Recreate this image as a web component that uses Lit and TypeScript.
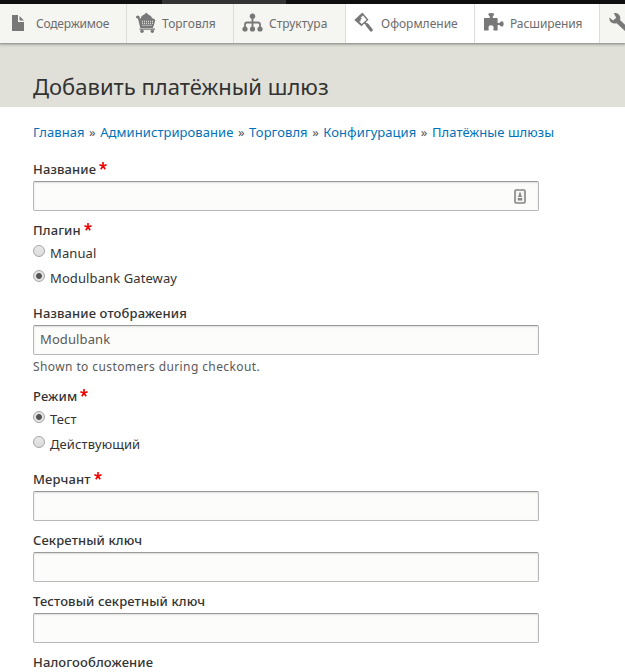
import { LitElement, html, css, svg, nothing } from "lit";
import { customElement, property } from "lit/decorators.js";
import { classMap } from "lit/directives/class-map.js";

const icons: Record<string, unknown> = {
  content: svg`<path d="M3 3H9V10H15V19H3ZM10.5 4V8.5H15Z"/>`,
  commerce: svg`<path fill="none" stroke="#787878" stroke-width="1.8" d="M1.5 5H3.5L6 15H18"/><circle cx="2.8" cy="5" r="1.6"/><path d="M6 6C6.3 3 9 3.5 11.3 .6 13.5 3.5 16 3 17 6L19 7Q20.3 7 20.2 8.5L18.5 14.5H6L4.7 7ZM4.5 16.4H20V17.8H4.5Z"/><path d="M7 9.3H18.5M7 11.3H18M7.5 13.3H17.5" stroke="#f5f5f2" stroke-width="1" stroke-dasharray="1 1" fill="none"/><circle cx="7" cy="19.3" r="1.7"/><circle cx="17.3" cy="19.3" r="1.7"/>`,
  structure: svg`<path fill="none" stroke="#787878" stroke-width="1.8" d="M10.5 4V17M3 17V12.5Q3 10.5 5 10.5H16Q18 10.5 18 12.5V17"/><circle cx="10.5" cy="4.2" r="2.7"/><circle cx="3" cy="17" r="2.6"/><circle cx="10.5" cy="17" r="2.6"/><circle cx="18" cy="17" r="2.6"/>`,
  appearance: svg`<path d="M.3 7.9 7.8 1Q8.4.6 9 1.2L14.5 7.8 7.4 14.2Z"/><path fill="#fff" d="M3.9 7.9 9 3.4 12.6 7.7 7.7 12.1Z"/><path d="M3 7 6.6 4Q6 6 8 6.5 5.8 7.2 6.6 9.3L4.4 9.5Z"/><path fill="none" stroke="#787878" stroke-width="2" d="M10.5 10.5 14 13.4"/><path fill="none" stroke="#787878" stroke-width="3.2" stroke-linecap="round" d="M13.2 13 17.2 18"/>`,
  extend: svg`<path d="M1 6H6.8V4.5Q5 3 5.3 1.5 8 .7 11 1.5 11.4 3 9.8 4.5V6H14.6V11H16.5Q18 8.6 20 9.6 21.5 12 20 14.3 18 15.3 16.5 13H14.6V18.6H10.7Q9.8 17.5 10.7 16.2 10.8 13.2 8 13.2 5.2 13.4 5.5 16.2 6.4 17.5 5.2 18.6H1Z"/>`,
  config: svg`<path d="M1.3 5.6 5 8.5 8.2 5.8 5.8 1.3Q9.5.3 11.6 3.5 12.7 5.4 12 8L22 17.5 19 21 8.7 11.2Q5.7 12 3.3 10.4 1 8.5 1.3 5.6Z"/>`,
};

@customElement("toolbar-tab")
class ToolbarTab extends LitElement {
  @property() icon = "content";
  @property() label = "";
  static styles = css`
    :host { display: flex; align-items: center; box-sizing: border-box; height: 39px; flex: none; overflow: hidden; white-space: nowrap;
      color: #6c6c6c; font: 12px/20px "Noto Sans", sans-serif; border-right: 1px solid #dcdcdc; }
    svg { width: 22px; height: 22px; flex: none; margin: 0 5px 1px 0; fill: #787878; }
    span { display: block; }
  `;
  render() {
    return html`<svg viewBox="0 0 22 22">${icons[this.icon]}</svg><span>${this.label}</span>`;
  }
}

@customElement("field-label")
class FieldLabel extends LitElement {
  @property() text = "";
  @property({ type: Boolean }) required = false;
  static styles = css`
    :host { display: flex; align-items: center; height: 24px; color: #333; white-space: nowrap; letter-spacing: .12px;
      font: 500 13px/24px "Noto Sans", sans-serif; }
    svg { width: 8px; height: 8px; margin: 0 0 6px 3px; stroke: #f00000; stroke-width: 1.6; fill: none; }
  `;
  render() {
    return html`<span>${this.text}</span>${this.required
      ? html`<svg viewBox="0 0 8 8"><path d="M4 4V0M4 4 .4 2.8M4 4 7.6 2.8M4 4 1.8 7.3M4 4 6.2 7.3" /></svg>`
      : nothing}`;
  }
}

@customElement("text-field")
class TextField extends LitElement {
  @property() label = "";
  @property() value = "";
  @property({ type: Boolean }) required = false;
  @property({ type: Boolean }) autofill = false;
  static styles = css`
    :host { display: block; }
    .box { display: flex; align-items: center; justify-content: space-between; box-sizing: border-box; width: 506px; height: 30px; padding: 0 12px 0 6px;
      border: 1px solid #b8b8b8; border-top-color: #999; border-radius: 2px; background: #fcfcfa;
      box-shadow: inset 0 1px 2px rgba(0,0,0,.125); color: #595959; font: 13px/26px "Noto Sans", sans-serif; letter-spacing: .1px; }
    span { padding-bottom: 2px; }
    svg { width: 12px; height: 15px; }
  `;
  render() {
    return html`<field-label .text=${this.label} .required=${this.required}></field-label>
      <div class="box"><span>${this.value}</span>${this.autofill
        ? html`<svg viewBox="0 0 12 15"><rect x="1" y="1" width="10" height="13" rx="1" fill="#f5f5f5" stroke="#858585" stroke-width="1.6"/><path fill="#888" d="M5.2 3.4H6.8V5L8 8H4L5.2 5ZM3.8 9H8.2V11.4H3.8Z"/></svg>`
        : nothing}</div>`;
  }
}

@customElement("radio-group")
class RadioGroup extends LitElement {
  @property() label = "";
  @property({ attribute: false }) options: string[] = [];
  @property({ type: Number }) selected = 0;
  static styles = css`
    :host { display: block; }
    .options { margin-top: -1px; }
    .option { display: flex; align-items: center; height: 25px; color: #333; font: 13px/25px "Noto Sans", sans-serif; letter-spacing: .1px; }
    .dot { box-sizing: border-box; width: 12px; height: 12px; margin: 0 5px 5px 0; border: 1px solid #a6a6a6; border-radius: 50%;
      background: linear-gradient(#e8e8e8, #dcdcdc); }
    .on { background: radial-gradient(circle, #555 0 2.5px, #e4e4e4 3.4px); }
  `;
  render() {
    return html`<field-label .text=${this.label} required></field-label>
      <div class="options">${this.options.map((o, i) => html`<div class="option">
        <span class=${classMap({ dot: true, on: i === this.selected })}></span><span>${o}</span></div>`)}</div>`;
  }
}

@customElement("app-root")
class AppRoot extends LitElement {
  static styles = css`
    :host { display: block; width: 625px; height: 672px; overflow: hidden; background: #fff; font-family: "Noto Sans", sans-serif; }
    .bar { position: relative; z-index: 2; height: 4px; background: #0f0f0f; display: flex; }
    .bar span { margin-left: 162px; width: 124px; background: #333; }
    .tray { position: relative; display: flex; height: 39px; background: #fff; box-shadow: 0 0 3px 1px #777b74; }
    .tab { padding-left: 8px; background: #f5f5f2; }
    .content { width: 127px; padding-left: 9px; letter-spacing: -.2px; }
    .commerce { width: 107px; }
    .structure { width: 112px; }
    .appearance { width: 129px; background: #fff; }
    .extend { width: 125px; background: #fff; letter-spacing: -.1px; }
    .config { width: 40px; }
    header { height: 64px; box-sizing: border-box; padding: 23px 0 0 33px; background: #e0e0d8; }
    h1 { margin: 0; font-size: 22px; font-weight: 400; line-height: 40px; color: #333; white-space: nowrap; }
    nav { display: flex; gap: 4.5px; padding: 13px 0 1px 33px; font-size: 13px; line-height: 24px; letter-spacing: .06px; color: #555; white-space: nowrap; }
    nav a { color: #0071b8; }
    form { display: flex; flex-direction: column; gap: 7px; padding: 12px 0 0 33px; }
    .display { margin-top: 3px; }
    .help { height: 22px; font-size: 12px; line-height: 23px; letter-spacing: .4px; color: #595959; }
    .merchant { margin-top: 3px; }
  `;
  render() {
    const tabs = [["content", "Содержимое"], ["commerce", "Торговля"], ["structure", "Структура"], ["appearance", "Оформление"], ["extend", "Расширения"], ["config", ""]];
    const crumbs = ["Главная", "Администрирование", "Торговля", "Конфигурация", "Платёжные шлюзы"];
    return html`
      <div class="bar"><span></span></div>
      <div class="tray">${tabs.map(([i, l]) => html`<toolbar-tab class="tab ${i}" .icon=${i} .label=${l}></toolbar-tab>`)}</div>
      <header><h1>Добавить платёжный шлюз</h1></header>
      <nav>${crumbs.map((c, i) => html`${i ? html`<span>»</span>` : nothing}<a>${c}</a>`)}</nav>
      <form>
        <text-field label="Название" required autofill></text-field>
        <radio-group label="Плагин" .options=${["Manual", "Modulbank Gateway"]} selected="1"></radio-group>
        <div class="display">
          <text-field label="Название отображения" value="Modulbank"></text-field>
          <div class="help">Shown to customers during checkout.</div>
        </div>
        <radio-group label="Режим" .options=${["Тест", "Действующий"]} selected="0"></radio-group>
        <text-field class="merchant" label="Мерчант" required></text-field>
        <text-field label="Секретный ключ"></text-field>
        <text-field label="Тестовый секретный ключ"></text-field>
        <field-label text="Налогообложение"></field-label>
      </form>`;
  }
}
